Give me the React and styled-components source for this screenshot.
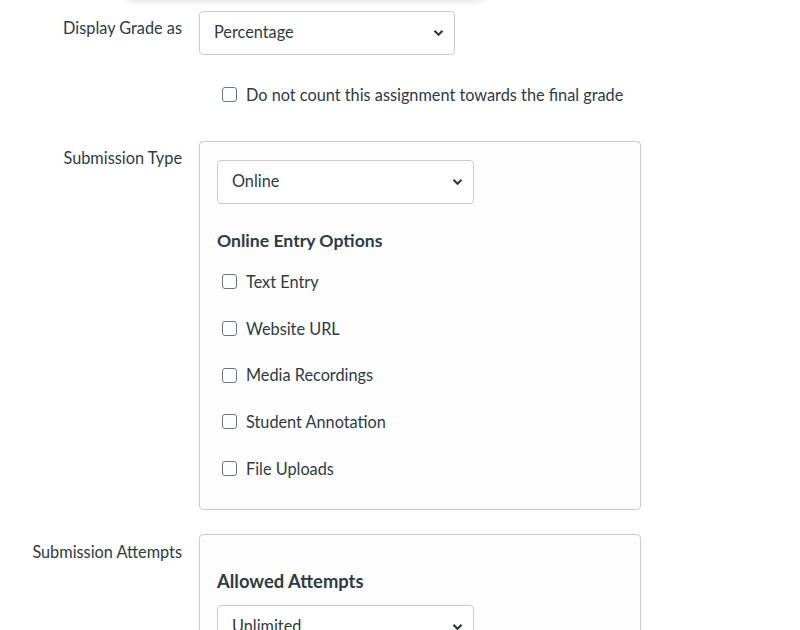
import React from "react";
import styled, { createGlobalStyle } from "styled-components";

const Global = createGlobalStyle`
  html, body { margin: 0; padding: 0; background: #fff; }
  body { font-family: Lato, "Open Sans", "Liberation Sans", sans-serif; color: #2d3b45; }
  * { box-sizing: border-box; }
`;

const Page = styled.div`
  position: relative;
  width: 800px;
  height: 630px;
  overflow: hidden;
  padding-top: 11px;
`;

const FloatingShadow = styled.div`
  position: absolute;
  left: 120px;
  top: -40px;
  width: 370px;
  height: 38px;
  border-radius: 16px;
  background: #fff;
  box-shadow: 0 2px 10px rgba(0, 0, 0, 0.16);
`;

const Row = styled.div`
  display: grid;
  grid-template-columns: 182px 442px;
  column-gap: 17px;
  align-items: start;
  margin-top: ${(p) => p.$mt || 0}px;
`;

const Label = styled.div`
  text-align: right;
  font-size: 16.3px;
  line-height: 24px;
  padding-top: ${(p) => p.$pt || 5}px;
  white-space: nowrap;
`;

const SelectWrap = styled.div`
  position: relative;
  width: ${(p) => p.$w}px;
  height: 44px;
  border: 1px solid #c7cdd1;
  border-radius: 4px;
  background: #fff;
  display: flex;
  align-items: center;
  padding-left: 14px;
  padding-bottom: 3px;
  font-size: 16.3px;
`;

const Chevron = styled.svg`
  position: absolute;
  right: 10px;
  top: 50%;
  margin-top: -4px;
`;

const Select = ({ w, children }) => (
  <SelectWrap $w={w}>
    {children}
    <Chevron width="11" height="8" viewBox="0 0 11 8">
      <path d="M1.5 1.8 L5.5 5.8 L9.5 1.8" fill="none" stroke="#2d3b45" strokeWidth="2.2" />
    </Chevron>
  </SelectWrap>
);

const CheckRow = styled.label`
  display: flex;
  align-items: center;
  height: ${(p) => p.$h || 24}px;
  padding-left: ${(p) => p.$pl || 0}px;
  font-size: 16.3px;
  gap: 9px;
  margin-top: ${(p) => p.$mt || 0}px;
`;

const Box = styled.span`
  width: 15px;
  height: 15px;
  border: 1.5px solid #6b7780;
  border-radius: 3px;
  background: #fff;
  flex: none;
  margin-top: 1px;
`;

const Fieldset = styled.div`
  border: 1px solid #c7cdd1;
  border-radius: 4px;
  background: #fdfdfe;
  padding: ${(p) => p.$pt}px 17px ${(p) => p.$pb}px 17px;
  height: ${(p) => (p.$h ? p.$h + "px" : "auto")};
`;

const Heading = styled.div`
  font-size: ${(p) => p.$fs || 18}px;
  font-weight: 700;
  line-height: 24px;
  margin-top: ${(p) => p.$mt || 0}px;
  margin-bottom: ${(p) => p.$mb || 0}px;
`;

const Options = styled.div`
  display: flex;
  flex-direction: column;
  margin-top: 5px;
  margin-bottom: 1px;
`;

const options = ["Text Entry", "Website URL", "Media Recordings", "Student Annotation", "File Uploads"];

export default function App() {
  return (
    <>
      <Global />
      <Page>
        <FloatingShadow />
        <Row>
          <Label>Display Grade as</Label>
          <div>
            <Select w={256}>Percentage</Select>
            <CheckRow $mt={27} $pl={23}>
              <Box />
              Do not count this assignment towards the final grade
            </CheckRow>
          </div>
        </Row>
        <Row $mt={35}>
          <Label>Submission Type</Label>
          <Fieldset $pt={18} $pb={17}>
            <Select w={257}>Online</Select>
            <Heading $mt={25} $fs={17.6}>Online Entry Options</Heading>
            <Options>
              {options.map((o) => (
                <CheckRow key={o} $h={46.7} $pl={5}>
                  <Box />
                  {o}
                </CheckRow>
              ))}
            </Options>
          </Fieldset>
        </Row>
        <Row $mt={24}>
          <Label $pt={6}>Submission Attempts</Label>
          <Fieldset $pt={34} $pb={17} $h={200}>
            <Heading $mb={12} $fs={18.4}>Allowed Attempts</Heading>
            <Select w={257}>Unlimited</Select>
          </Fieldset>
        </Row>
      </Page>
    </>
  );
}
